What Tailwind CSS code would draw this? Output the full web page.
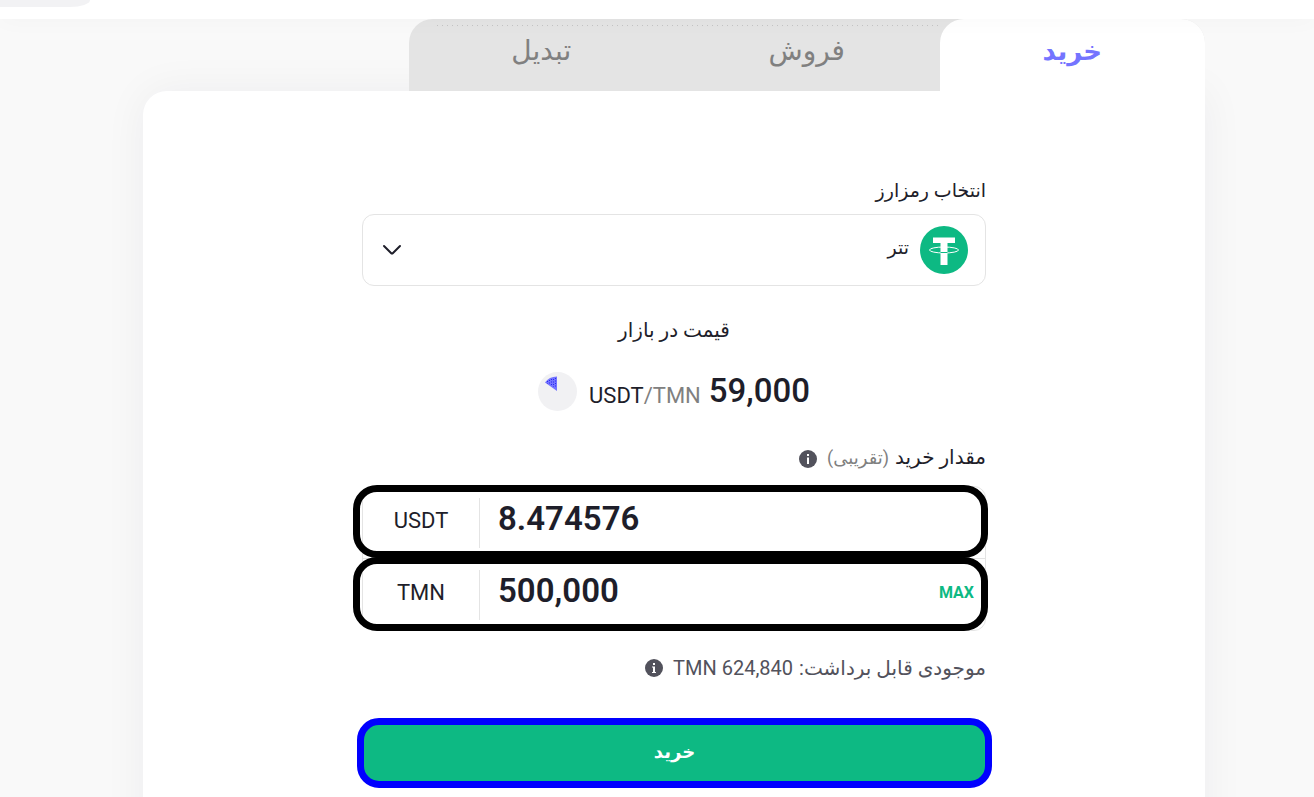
<!DOCTYPE html>
<html lang="fa" dir="rtl">
<head>
    <meta charset="UTF-8">
    <meta name="viewport" content="width=device-width, initial-scale=1.0">
    <title>خرید تتر</title>
    <script src="https://cdn.jsdelivr.net/npm/@tailwindcss/browser@4"></script>
</head>
<body class="h-screen overflow-hidden bg-[#f9f9f9] font-[Roboto,'DejaVu_Sans',sans-serif] text-[#1e1e2a]">
    <header class="relative z-20 flex h-[19px] justify-end bg-white shadow-[0_0_24px_rgba(0,0,0,0.03)]">
        <div class="h-[7px] w-[90px] rounded-br-[20px_7px] bg-[#f2f2f4]"></div>
    </header>

    <main class="pl-[34px]">
        <div class="mx-auto max-w-[1062px]">
            <!-- tabs -->
            <nav class="relative z-10 flex h-[72px] w-3/4 rounded-t-3xl bg-[#e4e4e4] text-[28px] text-[#808080]">
                <div class="absolute top-[6px] right-[265px] left-7 h-px bg-[repeating-linear-gradient(90deg,#c4c4c4_0_1px,transparent_1px_5px)]"></div>
                <button class="flex-1 rounded-t-3xl bg-white pb-2 text-[26px] font-bold text-[#7474ff]">خرید</button>
                <button class="flex-1 pb-2">فروش</button>
                <button class="flex-1 pb-2">تبدیل</button>
            </nav>

            <div class="rounded-tl-3xl bg-white pt-[84px] pb-24 shadow-[0_0_44px_rgba(30,30,60,0.055)]">
                <form class="mx-auto max-w-[624px]">
                    <label for="coin" class="block text-[19px] leading-8">انتخاب رمزارز</label>
                    <div class="relative mt-[7px]">
                        <select id="coin" class="h-[72px] w-full appearance-none rounded-xl border border-[#e4e4e4] bg-white pr-[76px] pb-1 text-[19px]">
                            <option>تتر</option>
                        </select>
                        <svg class="pointer-events-none absolute top-3 right-[18px] size-12" viewBox="0 0 48 48" fill="none">
                            <circle cx="24" cy="24" r="24" fill="#0db983"/>
                            <path d="M13 11.500h22v5.500H27.500V39h-7V17H13z" fill="#fff"/>
                            <ellipse cx="24" cy="24" rx="14.500" ry="3" stroke="#fff"/>
                            <path d="M20.500 26.500h7" stroke="#0db983"/>
                        </svg>
                        <svg class="pointer-events-none absolute top-[30px] left-5 h-3 w-5" viewBox="0 0 20 12" fill="none" stroke="#1e1e2a" stroke-width="2" stroke-linecap="round" stroke-linejoin="round">
                            <path d="M2 2l7 7q1 1 2 0l7-7"/>
                        </svg>
                    </div>

                    <p class="mt-7 text-center text-[20px] leading-8">قیمت در بازار</p>
                    <div class="mt-[25px] flex h-10 items-center justify-center">
                        <span class="text-[33px] font-medium">59,000</span>
                        <span dir="ltr" class="mt-2 mr-2 text-[22px]">USDT<span class="text-[#808080]">/TMN</span></span>
                        <svg class="mr-3 size-[39px]" viewBox="0 0 39 39">
                            <circle cx="19.500" cy="19.500" r="19.500" fill="#f1f1f3"/>
                            <path d="M19 4.500V19L7 10.500Q11 4.500 19 4.500z" fill="#7474ff"/>
                            <path d="M17.500 6v10M15.500 7v8M13.500 7v6M11.500 8v4M9.500 9v3" stroke="#2828f0" stroke-dasharray="1 1.500"/>
                        </svg>
                    </div>

                    <div class="mt-[30px] flex h-8 items-center">
                        <label for="amount-usdt" class="text-[20px]">مقدار خرید</label>
                        <span class="mr-[6px] text-[18px] text-[#808080]">(تقریبی)</span>
                        <svg class="mt-1 mr-[10px] size-[18px]" viewBox="0 0 18 18">
                            <circle cx="9" cy="9" r="9" fill="#52525c"/>
                            <path d="M8 4h2v2H8zM8 7.500h2V14H8z" fill="#fff"/>
                        </svg>
                    </div>

                    <div dir="ltr" class="relative mt-[13px] rounded-xl border border-[#e4e4e4]">
                        <div class="flex h-[71px] items-center">
                            <label for="amount-usdt" class="w-[116px] pb-1 text-center text-[22px]">USDT</label>
                            <div class="h-[50px] w-px bg-[#e4e4e4]"></div>
                            <input id="amount-usdt" type="text" value="8.474576" class="min-w-0 flex-1 pb-2 pl-[18px] text-[33px] font-semibold outline-none">
                        </div>
                        <div class="flex h-[72px] items-center border-t border-[#e4e4e4]">
                            <label for="amount-tmn" class="w-[116px] pb-1 text-center text-[22px]">TMN</label>
                            <div class="h-[50px] w-px bg-[#e4e4e4]"></div>
                            <input id="amount-tmn" type="text" value="500,000" class="min-w-0 flex-1 pb-2 pl-[18px] text-[33px] font-semibold outline-none">
                            <button type="button" class="px-[11px] pb-1 text-[16px] font-bold text-[#0db983]">MAX</button>
                        </div>
                        <!-- highlight frames -->
                        <div class="pointer-events-none absolute -top-[2px] -right-[3px] -left-[10px] h-[73px] rounded-3xl border-7 border-black"></div>
                        <div class="pointer-events-none absolute top-[70px] -right-[3px] -left-[10px] h-[74px] rounded-3xl border-7 border-black"></div>
                    </div>

                    <div class="mt-[21px] flex h-8 items-center text-[20px] text-[#52525c]">
                        <span>موجودی قابل برداشت:</span>
                        <span dir="ltr" class="mr-[6px]">TMN 624,840</span>
                        <svg class="mr-[10px] size-[18px]" viewBox="0 0 18 18">
                            <circle cx="9" cy="9" r="9" fill="#52525c"/>
                            <path d="M8 4h2v2H8zM7 7.500h3V13h1v1H7v-1h1V8.500H7z" fill="#fff"/>
                        </svg>
                    </div>

                    <div class="mt-[34px] -mr-[6px] -ml-[5px]">
                        <button type="button" class="h-[70px] w-full rounded-[22px] border-7 border-[#0000ff] bg-[#0db983] pb-1 text-[18px] font-bold text-white">خرید</button>
                    </div>
                </form>
            </div>
        </div>
    </main>
</body>
</html>
